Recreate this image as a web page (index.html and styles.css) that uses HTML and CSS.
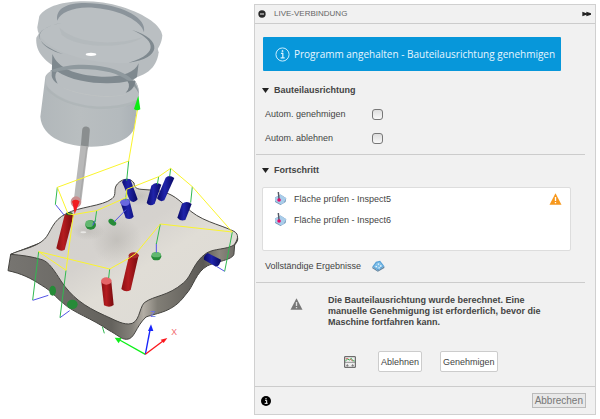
FILE: index.html
```html
<!DOCTYPE html>
<html lang="de">
<head>
<meta charset="utf-8">
<title>Live-Verbindung</title>
<link rel="stylesheet" href="styles.css">
</head>
<body>
<main class="workspace">
  <div class="scene">
    <svg class="model" viewBox="0 0 762 1257" aria-hidden="true">
      <defs>
        <linearGradient id="surface" x1="0" y1="0" x2="1" y2="1"><stop offset="0" stop-color="#d3d1cf"/><stop offset=".45" stop-color="#d5d2ce"/><stop offset=".6" stop-color="#e0ddd6"/><stop offset="1" stop-color="#dcdad5"/></linearGradient>
        <linearGradient id="edge" x1="0" y1="0" x2="1" y2="0"><stop offset="0" stop-color="#777571"/><stop offset=".45" stop-color="#64625d"/><stop offset=".54" stop-color="#85827b"/><stop offset=".59" stop-color="#b3aea5"/><stop offset=".65" stop-color="#817e76"/><stop offset=".85" stop-color="#5b5955"/><stop offset=".92" stop-color="#8a867c"/><stop offset="1" stop-color="#6a6863"/></linearGradient>
        <linearGradient id="red"><stop offset="0" stop-color="#8b1013"/><stop offset=".4" stop-color="#b51c20"/><stop offset="1" stop-color="#770b0e"/></linearGradient>
        <linearGradient id="blue"><stop offset="0" stop-color="#090968"/><stop offset=".45" stop-color="#2024ab"/><stop offset="1" stop-color="#080862"/></linearGradient>
        <linearGradient id="glass"><stop offset="0" stop-color="#b1b7ba"/><stop offset=".4" stop-color="#b9bec0"/><stop offset=".8" stop-color="#b4babd"/><stop offset="1" stop-color="#a9b0b5"/></linearGradient>
        <radialGradient id="shade"><stop offset="0" stop-color="#999791" stop-opacity=".3"/><stop offset="1" stop-color="#999791" stop-opacity="0"/></radialGradient>
      </defs>
      <!-- Part -->
      <g transform="translate(0 480)">
        <path fill="url(#edge)" stroke="#454440" stroke-width="3" d="M32 283 L24 332 C65 341 92 354 125 376 C155 393 165 410 190 430 C220 458 277 476 325 510 C352 524 364 538 379 538 C405 538 405 502 438 471 C472 458 518 458 556 405 C582 379 586 337 623 317 C657 303 704 298 702 279 L704 255 Q718 239 711 228 L350 160 Z"/>
        <path fill="url(#surface)" stroke="#454440" stroke-width="3" d="M32 283 C60 269 108 263 134 237 C153 217 157 180 199 161 C237 140 307 139 336 116 C352 104 338 88 352 72 C371 51 393 56 402 69 C404 82 407 86 423 88 L464 91 C506 95 530 112 557 139 C596 183 658 192 702 214 C718 223 714 239 702 255 C680 269 642 265 620 279 C579 306 576 349 550 369 C504 409 463 406 433 428 C416 445 420 493 385 492 C363 492 341 478 313 466 C251 438 215 411 183 363 C166 337 147 305 126 299 C98 290 63 285 32 283Z"/>
        <ellipse cx="265" cy="213" rx="50" ry="28" fill="url(#shade)"/>
        <ellipse cx="350" cy="240" rx="75" ry="75" fill="url(#shade)"/>
        <ellipse cx="420" cy="108" rx="48" ry="30" fill="url(#shade)"/>
        <ellipse cx="250" cy="217" rx="9" ry="3" fill="#e8e7e5"/>
      </g>
      <!-- Probe -->
      <path fill="url(#glass)" d="M136 230 L121 350 C127 425 229 447 307 438 C361 431 401 407 404 377 L417 278 C415 227 360 198 281 193 C203 190 145 207 136 230Z"/>
      <path fill="#b9bec1" d="M140 225 C134 245 138 262 160 280 C230 335 350 340 400 310 Q415 297 417 278 C415 227 360 198 281 193 C203 190 150 207 140 225Z"/>
      <path fill="#b7bcbf" d="M109 113 C100 209 267 248 370 239 C437 233 470 205 476 157 L458 93 L130 78Z"/>
      <path fill="#babfc2" d="M118 48 C150 0 270-8 365 20 C441 44 484 78 487 106 C484 154 444 184 394 188 C264 199 109 145 112 81Z"/>
      <path fill="#b2b8bb" opacity=".7" d="M178 82 C215 124 325 143 428 112 C375 151 225 143 185 104Z"/>
      <path fill="#8b949b" d="M172 62 C164 16 221 3 291 11 C370 18 441 53 432 97 C424 63 360 30 286 24 C226 18 182 36 172 62Z"/>
      <path fill="#7f898f" d="M187 68 C86 88 103 129 190 163 C118 143 104 104 134 86 Q153 74 187 68ZM397 90 C456 115 488 158 386 188 C484 176 490 119 397 90Z"/>
      <path fill="#7f898f" d="M157 162 L155 228 Q158 243 173 251 Q160 229 171 214 C210 242 280 251 325 250 C375 249 402 241 411 231 L416 190 C405 218 365 232 304 230 C224 225 174 205 157 162Z"/>
      <path fill="#8f999e" d="M150 212 C200 190 270 190 319 202 C375 215 412 240 416 280 C405 253 370 227 330 217 C280 205 210 203 165 216Z"/>
      <path fill="#788288" d="M406 243 C405 260 395 273 377 278 Q394 260 382 242Z"/>
      <path fill="#c1c4c5" opacity=".6" d="M175 255 C215 280 330 300 390 280 C340 302 220 288 175 255Z"/>
      <path fill="#aab0b3" opacity=".55" d="M140 257 C181 310 302 342 410 300 L405 312 C302 347 182 316 140 269Z"/>
      <ellipse cx="273" cy="163" rx="16" ry="5" fill="#fff"/>
      <path stroke="#8a8e8f" stroke-width="23" stroke-linecap="round" d="M258 391 L254 438"/>
      <path stroke="#b8b8b8" stroke-width="23" d="M253 438 L233 600"/>
      <path stroke="#a9a9a9" stroke-width="4" d="M261 438 L240 600"/>
      <g transform="translate(0 480)" fill="none">
        <ellipse cx="228" cy="126" rx="16" ry="17" fill="#c98f8f"/>
        <path fill="#f41920" d="M217 124 L239 124 L224 163Z"/>
        <ellipse cx="227" cy="125" rx="10" ry="6" fill="#ef2020"/>
        <!-- Measuring cylinders -->
        <path fill="url(#blue)" d="M366 66 Q373 52 391 58 L413 118 Q402 133 389 120ZM361 126 Q373 112 388 119 L401 170 Q391 182 377 174Z"/>
        <path fill="url(#blue)" d="M454 77 Q467 63 484 74 L464 131 Q450 141 440 129Z"/>
        <path fill="url(#blue)" d="M497 53 Q507 42 523 54 L493 121 Q480 128 471 115Z"/>
        <path fill="url(#blue)" d="M546 131 Q561 120 575 132 L556 180 Q541 185 532 173Z"/>
        <path fill="url(#blue)" d="M623 279 L663 299 Q660 317 648 320 L612 299 Q609 287 623 279Z"/>
        <ellipse cx="375" cy="127" rx="14" ry="11" fill="#6967df"/>
        <path fill="url(#red)" d="M194 164 Q209 154 221 166 L194 269 Q181 277 169 265Z"/>
        <path fill="url(#red)" d="M387 287 Q401 276 416 286 L392 390 Q377 399 364 387Z"/>
        <path fill="url(#red)" d="M304 365 L334 365 L341 435 Q329 445 312 436Z"/>
        <ellipse cx="319" cy="363" rx="16" ry="11" fill="#e56568"/>
        <ellipse cx="401" cy="286" rx="15" ry="9" fill="#a9292a"/>
        <ellipse cx="208" cy="161" rx="10" ry="5" fill="#24572a"/>
        <g fill="#268b38"><ellipse cx="272" cy="195" rx="16" ry="14"/><ellipse cx="337" cy="187" rx="13" ry="8" transform="rotate(35 337 187)"/><ellipse cx="469" cy="289" rx="15" ry="12"/><ellipse cx="158" cy="392" rx="10" ry="15"/><ellipse cx="217" cy="433" rx="16" ry="14"/></g>
        <g fill="#62b770"><ellipse cx="268" cy="191" rx="12" ry="10"/><ellipse cx="469" cy="284" rx="14" ry="8"/></g>
        <g stroke="#5355e8" stroke-width="3"><path d="M167 134 L192 165M278 196 L287 179M343 185 L378 149M469 278V250M98 421 L145 406M180 473 L209 452M651 320 L674 334"/></g>
        <g stroke="#31b951" stroke-width="3"><path d="M172 82 L166 134M386 3 L380 62M380 92 L377 121M290 152 L285 187M512 25 L509 49M476 50 L472 73M577 80 L572 128M481 192 L469 252M329 327 L326 354M116 275 L98 420M198 331 L180 473M697 216 L674 334M307 500 L313 520"/></g>
        <path stroke="#fbf52c" stroke-width="3" d="M413-154 L386 3 L172 82 L204 161 L220 164 L290 152 L380 112V88 L476 50 L512 25 L577 80 L697 216 L481 192 L408 280 L388 294 L329 327 L116 275 L198 331 L220 164"/>
        <path fill="#0bed12" d="M415-193 L402-153 Q411-146 421-152Z"/>
        <!-- Coordinate axes -->
        <path stroke="#0cf018" stroke-width="4" d="M436 583 L359 540"/><path fill="#0cf018" d="M344 533 L365 534 L356 550Z"/>
        <path stroke="#1824fa" stroke-width="4" d="M436 583 L450 510"/><path fill="#1824fa" d="M453 493 L444 513 L460 513Z"/>
        <path stroke="#fb171d" stroke-width="4" d="M436 583 L489 543"/><path fill="#fb171d" d="M502 534 L482 539 L491 549Z"/>
        <text class="axis axis-z" x="451" y="471">Z</text><text class="axis axis-x" x="514" y="525">X</text>
      </g>
    </svg>
  </div>
  <section class="panel" aria-labelledby="panel-title">
    <header class="panel-header">
      <button class="icon-button" aria-label="Minimieren"><svg class="dot" viewBox="0 0 24 24"><circle cx="12" cy="12" r="11" fill="#292929"/><path d="M6 12h12" stroke="#f2f2f2" stroke-width="3"/></svg></button>
      <h1 id="panel-title">LIVE-VERBINDUNG</h1>
      <button class="icon-button" aria-label="Anheften"><svg class="forward" viewBox="0 0 30 18"><path fill="#222" d="M1 2l12 5V2l14 5v4l-14 5v-5L1 16z"/></svg></button>
    </header>
    <div class="banner" role="status">
      <svg class="banner-icon" viewBox="0 0 48 48" fill="none" stroke="#d8f1ff" stroke-width="3"><circle cx="24" cy="24" r="21"/><path d="M19 20h6v15m-7 0h13" stroke-width="4"/><circle cx="24" cy="13" r="2" fill="#d8f1ff"/></svg>
      <span>Programm angehalten - Bauteilausrichtung genehmigen</span>
    </div>
    <section class="group alignment">
      <h2><svg class="chevron" viewBox="0 0 20 14"><path d="M0 0h20L10 14z"/></svg>Bauteilausrichtung</h2>
      <div class="option"><label for="approve">Autom. genehmigen</label><input id="approve" type="checkbox"></div>
      <div class="option"><label for="reject">Autom. ablehnen</label><input id="reject" type="checkbox"></div>
    </section>
    <section class="group progress">
      <h2><svg class="chevron" viewBox="0 0 20 14"><path d="M0 0h20L10 14z"/></svg>Fortschritt</h2>
      <ul class="results">
        <li>
          <svg class="probe-icon" viewBox="0 0 36 36"><path fill="#6c91b5" d="M3 15L18 7l16 10-2 11-14 8L3 28z"/><path fill="#a9cdea" d="M3 15L18 7l16 10-8 15-8 2L3 25z"/><path d="M12 0l2 20" stroke="#535866" stroke-width="4"/><circle cx="14" cy="22" r="5" fill="#e50b66"/></svg>
          <span>Fläche prüfen - Inspect5</span>
          <svg class="warning" viewBox="0 0 38 36"><path fill="#f7981d" d="M19 1L37 35H1z"/><path d="M19 12v12m0 3v4" stroke="#fff" stroke-width="4"/></svg>
        </li>
        <li>
          <svg class="probe-icon" viewBox="0 0 36 36"><path fill="#6c91b5" d="M3 15L18 7l16 10-2 11-14 8L3 28z"/><path fill="#a9cdea" d="M3 15L18 7l16 10-8 15-8 2L3 25z"/><path d="M12 0l2 20" stroke="#535866" stroke-width="4"/><circle cx="14" cy="22" r="5" fill="#e50b66"/></svg>
          <span>Fläche prüfen - Inspect6</span>
        </li>
      </ul>
      <div class="option"><span>Vollständige Ergebnisse</span><button class="icon-button" aria-label="Vollständige Ergebnisse"><svg class="result-icon" viewBox="0 0 40 36"><path fill="#66859f" d="M1 20l17 12 20-13v5L18 36 1 25z"/><path fill="#559fd6" d="M1 20L12 5l13-3 13 17-20 13z"/><path d="M5 20l9-12 10-2 10 12-16 10z" fill="#7fbfe9"/><path d="M11 20h4m5 4h4m-6-12h4m3 6h4" stroke="#f4fbff" stroke-width="4"/></svg></button></div>
    </section>
    <section class="confirmation">
      <div class="message">
        <svg class="warning" viewBox="0 0 38 36"><path fill="#777" d="M19 1L37 35H1z"/><path d="M19 12v12m0 3v4" stroke="#ddd" stroke-width="4"/></svg>
        <p>Die Bauteilausrichtung wurde berechnet. Eine manuelle Genehmigung ist erforderlich, bevor die Maschine fortfahren kann.</p>
      </div>
      <div class="actions">
        <button class="icon-button" aria-label="Ergebnisdiagramm"><svg class="chart-icon" viewBox="0 0 36 36"><path fill="#eee" stroke="#555" stroke-width="3" d="M2 2h32v32H2z"/><path fill="none" stroke="#35a951" stroke-width="3" d="M4 15l7-6 5 3 6-5 4 7 6 1"/><path fill="none" stroke="#d56c69" stroke-width="3" d="M5 8h8m5 1l8 6"/><path stroke="#666" stroke-width="2" d="M2 19h32M6 29h8m8 0h8M10 24v8m16-8v8"/></svg></button>
        <button class="action">Ablehnen</button>
        <button class="action">Genehmigen</button>
      </div>
    </section>
    <footer class="panel-footer">
      <button class="icon-button" aria-label="Information"><svg class="info" viewBox="0 0 30 30"><circle cx="15" cy="15" r="15"/><path d="M12 13h5v9m-6 0h9" fill="none" stroke="#fff" stroke-width="3"/><circle cx="15" cy="8" r="2" fill="#fff"/></svg></button>
      <button class="cancel">Abbrechen</button>
    </footer>
  </section>
</main>
</body>
</html>
```
FILE: styles.css
```css
* { box-sizing: border-box; }
body { margin: 0; background: #fff; color: #444; font: 9px/12px "Liberation Sans", sans-serif; }
svg { display: block; }
button { font: inherit; color: inherit; }
h1, h2, p, ul { margin: 0; padding: 0; }
.workspace { display: grid; grid-template-columns: minmax(0, 254fr) minmax(0, 342fr); align-items: start; min-height: 100vh; padding-right: 4px; }
.model { width: 100%; }
.axis { font: 26px "Liberation Sans", sans-serif; }
.axis-z { fill: #6870e8; }
.axis-x { fill: #f26a6e; }
.panel { margin-top: 4px; background: #f1f1f1; border: 1px solid #d0d0d0; }
.panel-header { display: flex; align-items: center; gap: 8px; height: 19px; padding: 0 3px; border-bottom: 1px solid #ccc; }
.panel-header h1 { flex: 1; color: #666; font-size: 8px; font-weight: 400; }
.icon-button { padding: 0; border: 0; background: none; }
.dot { width: 8px; height: 8px; }
.forward { width: 10px; height: 6px; }
.banner { display: flex; align-items: center; gap: 4px; height: 34px; margin: 13px 34px 0 8px; padding-left: 12px; border-radius: 1px; background: #0797da; color: #e7f6ff; font: 10px/14px "Open Sans", sans-serif; white-space: nowrap; }
.banner-icon { width: 15px; height: 15px; }
.group { margin: 0 10px 0 1px; border-bottom: 1px solid #ccc; }
h2 { display: flex; align-items: center; gap: 5px; padding-left: 6px; font-size: 9px; line-height: 12px; }
.chevron { width: 7px; height: 5px; fill: #222; }
.alignment { padding: 13px 0 4px; }
.option { display: grid; grid-template-columns: 107px auto; justify-content: start; align-items: center; height: 24px; padding-left: 9px; }
.alignment h2 { margin-bottom: 6px; }
input { appearance: none; width: 11px; height: 11px; margin: 0; border: 1px solid #777; border-radius: 3px; background: linear-gradient(#ddd, #f8f8f8); }
.progress { padding: 9px 0 4px; }
.results { height: 64px; margin: 11px 14px 3px 6px; border: 1px solid #ddd; border-radius: 2px; background: #fff; list-style: none; }
.results li { display: flex; align-items: center; gap: 7px; height: 21px; padding: 0 8px 0 11px; }
.results span { flex: 1; }
.probe-icon { width: 13px; height: 13px; }
.warning { width: 13px; height: 12px; }
.result-icon { width: 13px; height: 12px; }
.confirmation { padding: 12px 34px 14px 35px; }
.message { display: grid; grid-template-columns: 13px 1fr; gap: 25px; font-size: 9px; font-weight: 700; line-height: 11px; }
.message .warning { margin-top: 3px; }
.actions { display: flex; align-items: center; gap: 18px; margin-top: 23px; padding-left: 54px; }
.chart-icon { width: 12px; height: 12px; }
.action { height: 21px; padding: 0 2px; border: 1px solid #ccc; border-radius: 2px; background: #fff; }
.actions .icon-button { margin-right: 4px; }
.panel-footer { display: flex; align-items: center; justify-content: space-between; height: 28px; padding: 0 9px 0 6px; border-top: 1px solid #ccc; }
.info { width: 10px; height: 10px; }
.cancel { height: 15px; padding: 0 2px; border: 1px solid #bbb; background: #e8e8e8; color: #777; font-size: 10px; line-height: 12px; }
```
